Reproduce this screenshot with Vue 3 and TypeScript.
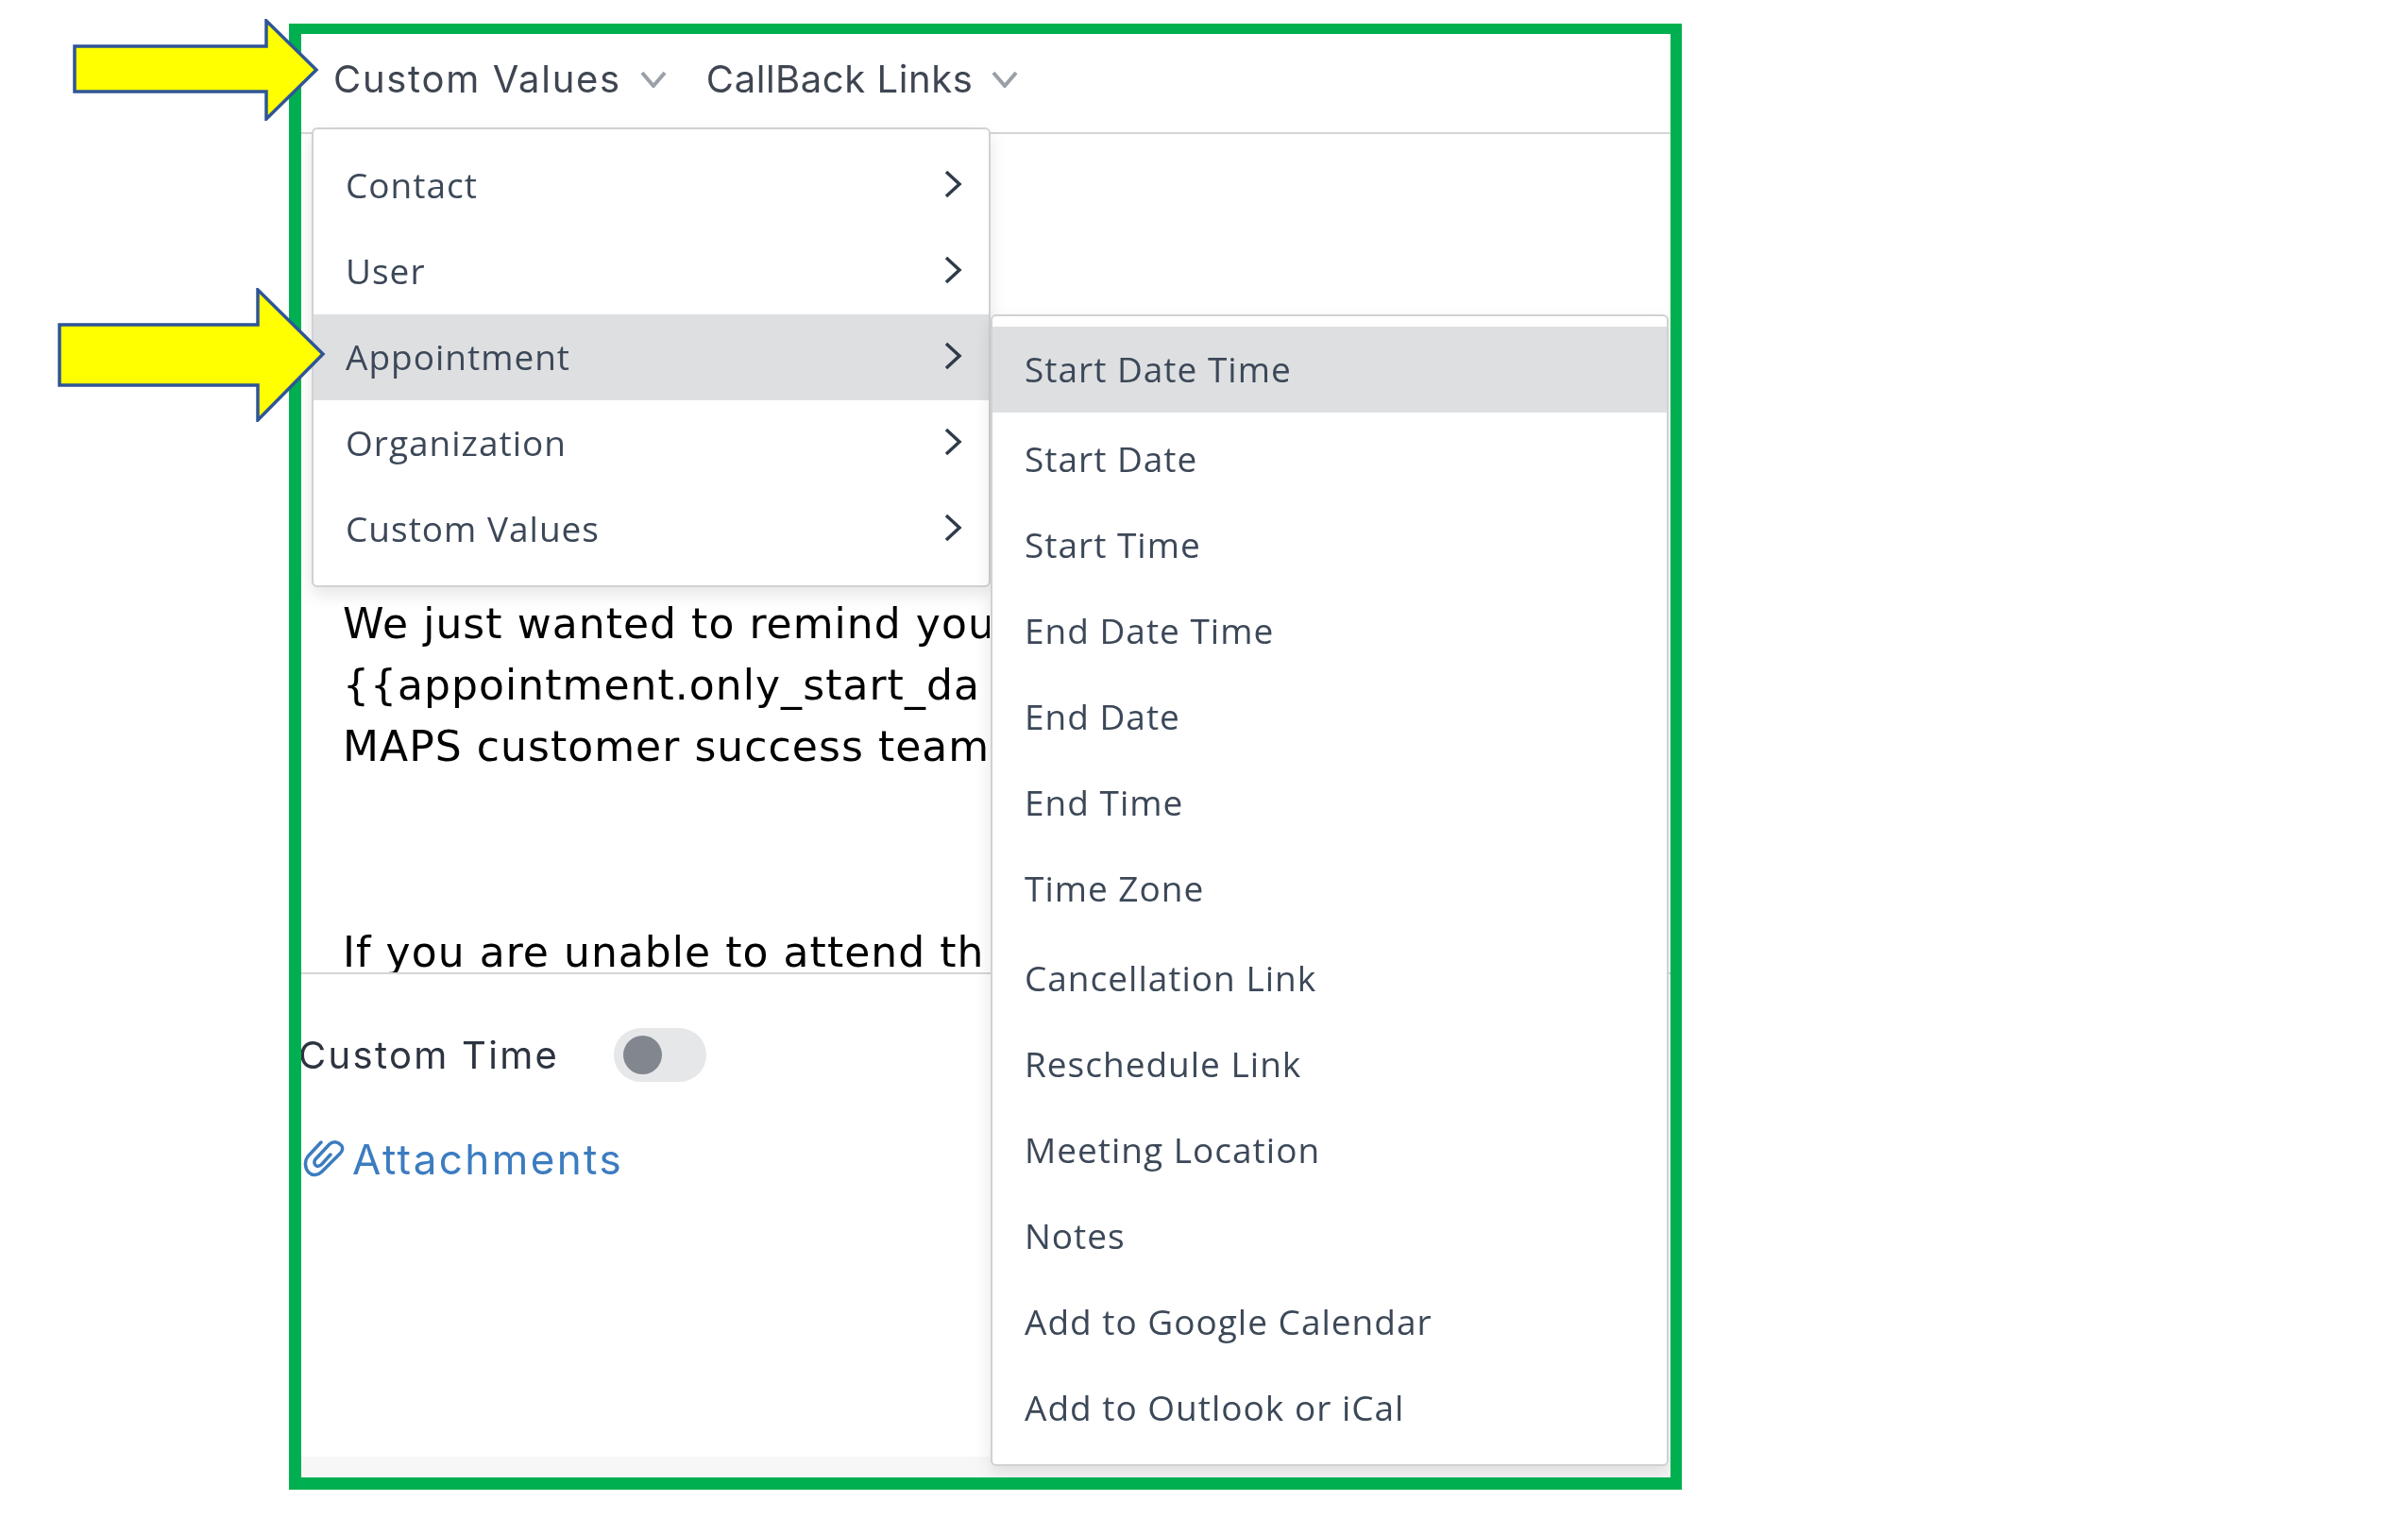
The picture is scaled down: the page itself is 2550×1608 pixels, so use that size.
<script setup lang="ts">
const mainItems: string[] = ['Contact', 'User', 'Appointment', 'Organization', 'Custom Values']
const groups: string[][] = [
  ['Start Date Time'],
  ['Start Date', 'Start Time', 'End Date Time', 'End Date', 'End Time', 'Time Zone'],
  ['Cancellation Link', 'Reschedule Link', 'Meeting Location', 'Notes', 'Add to Google Calendar', 'Add to Outlook or iCal'],
]
const lines: string[] = [
  'We just wanted to remind you',
  '{{appointment.only_start_da',
  'MAPS customer success team',
]
</script>

<template>
  <div class="page">
    <div class="frame">
      <header class="toolbar">
        <button class="tool">
          <span>Custom Values</span>
          <svg class="caret" viewBox="0 0 28 18"><path d="M2 2l12 14L26 2" /></svg>
        </button>
        <button class="tool tool-tight">
          <span>CallBack Links</span>
          <svg class="caret" viewBox="0 0 28 18"><path d="M2 2l12 14L26 2" /></svg>
        </button>
      </header>

      <section class="editor">
        <div class="editor-text">
          <p v-for="line in lines" :key="line" class="line">{{ line }}</p>
          <p class="line spacer-line"></p>
          <p class="line">If you are unable to attend th</p>
        </div>
      </section>

      <div class="toggle-row">
        <span class="toggle-label">Custom Time</span>
        <span class="toggle"><span class="knob"></span></span>
      </div>

      <div class="attach-row">
        <svg class="clip" viewBox="0 0 44 40">
          <path d="M19 2L5 17C1 22 2 30 6 34C10 38 16 37 20 33L39 14C43 10 42 6 39 4C36 1 31 1 28 4L13 20C11 23 12 26 14 27C16 28 18 27 20 25L29 15" />
        </svg>
        <span>Attachments</span>
      </div>

      <div class="grow"></div>
      <div class="strip"></div>

      <nav class="menu main-menu">
        <div v-for="item in mainItems" :key="item" class="item" :class="{ active: item === 'Appointment' }">
          <span class="label">{{ item }}</span>
          <svg class="chev" viewBox="0 0 20 30"><path d="M3 2l14 13L3 28" /></svg>
        </div>
      </nav>

      <nav class="menu sub-menu">
        <div v-for="(group, i) in groups" :key="i" class="group">
          <div v-for="item in group" :key="item" class="item" :class="{ active: item === 'Start Date Time' }">
            <span class="label">{{ item }}</span>
          </div>
        </div>
      </nav>
    </div>

    <svg class="arrow arrow-one" viewBox="0 0 262 108">
      <polygon points="2,29 205,29 205,2 258,54 205,106 205,77 2,77" />
    </svg>
    <svg class="arrow arrow-two" viewBox="0 0 284 142">
      <polygon points="2,39 212,39 212,2 281,70 212,140 212,103 2,103" />
    </svg>
  </div>
</template>

<style>
html, body { margin: 0; background: #fff; }
</style>

<style scoped>
.page {
  position: relative;
  width: 2550px;
  height: 1608px;
  padding: 25px 0 0 306px;
  box-sizing: border-box;
  background: #fff;
  overflow: hidden;
}
.frame {
  position: relative;
  width: 1475px;
  height: 1553px;
  box-sizing: border-box;
  border-style: solid;
  border-color: #00b050;
  border-width: 11px 12px 13px 13px;
  background: #fff;
  display: flex;
  flex-direction: column;
  overflow: hidden;
}
.toolbar {
  height: 106px;
  flex: none;
  box-sizing: border-box;
  border-bottom: 2px solid #d4d5d7;
  display: flex;
  align-items: flex-start;
  padding: 26px 0 0 34px;
  gap: 42px;
}
.tool {
  border: 0;
  background: none;
  padding: 0;
  display: flex;
  align-items: center;
  gap: 20px;
  font-family: "Inter", sans-serif;
  font-size: 40px;
  letter-spacing: 1.7px;
  line-height: 44px;
  color: #3f4652;
}
.tool-tight { letter-spacing: 0.55px; }
.tool span { filter: blur(0.5px); }
.caret { width: 28px; height: 18px; filter: blur(0.4px); }
.caret path { fill: none; stroke: #9aa0a8; stroke-width: 4; }
.editor {
  height: 890px;
  flex: none;
  box-sizing: border-box;
  border-bottom: 2px solid #d4d5d7;
  overflow: hidden;
}
.editor-text {
  width: 729px;
  height: 888px;
  box-sizing: border-box;
  padding: 486px 0 0 44px;
  overflow: hidden;
}
.line {
  margin: 0;
  height: 65px;
  line-height: 65px;
  white-space: nowrap;
  font-family: "DejaVu Sans", sans-serif;
  font-size: 44px;
  letter-spacing: 1.05px;
  color: #000;
  filter: blur(0.4px);
}
.spacer-line { height: 153px; }
.toggle-row {
  display: flex;
  align-items: center;
  margin-top: 57px;
  height: 57px;
}
.toggle-label {
  width: 331px;
  margin-left: -3px;
  font-family: "Inter", sans-serif;
  font-size: 40px;
  letter-spacing: 2.3px;
  white-space: nowrap;
  color: #2c3440;
  filter: blur(0.4px);
}
.toggle {
  width: 98px;
  height: 57px;
  margin-left: 3px;
  border-radius: 29px;
  background: #e5e7e9;
  display: flex;
  align-items: center;
  padding-left: 10px;
  box-sizing: border-box;
}
.knob { width: 41px; height: 41px; border-radius: 50%; background: #81868f; }
.attach-row {
  display: flex;
  align-items: center;
  gap: 8px;
  margin-top: 60px;
  padding-left: 2px;
  height: 44px;
  font-family: "Inter", sans-serif;
  font-size: 44px;
  letter-spacing: 2.4px;
  color: #3c7cc0;
}
.attach-row span { filter: blur(0.4px); }
.clip { width: 44px; height: 40px; filter: blur(0.4px); }
.clip path { fill: none; stroke: #3c7cc0; stroke-width: 3.5; stroke-linecap: round; stroke-linejoin: round; }
.grow { flex: 1; }
.strip { height: 22px; flex: none; background: #f7f7f8; }
.menu {
  position: absolute;
  box-sizing: border-box;
  background: #fff;
  border: 2px solid #d0d1d3;
  border-radius: 6px;
  box-shadow: 0 8px 18px rgba(0, 0, 0, 0.1);
  font-family: "Open Sans", sans-serif;
  font-size: 37px;
  letter-spacing: 1px;
  color: #3c4858;
}
.main-menu {
  left: 11px;
  top: 99px;
  width: 719px;
  height: 487px;
  padding: 14px 0;
}
.sub-menu {
  left: 730px;
  top: 297px;
  width: 718px;
  height: 1220px;
  padding: 11px 0;
  display: flex;
  flex-direction: column;
  gap: 4px;
}
.item {
  height: 91px;
  display: flex;
  align-items: center;
  justify-content: space-between;
  padding: 0 28px 0 34px;
}
.label { filter: blur(0.4px); margin-bottom: 3px; }
.active { background: #dddfe1; }
.chev { width: 20px; height: 30px; margin-top: -4px; }
.chev path { fill: none; stroke: #2f3a4a; stroke-width: 3.5; }
.arrow { position: absolute; }
.arrow polygon { fill: #ffff00; stroke: #2f5597; stroke-width: 3.5; }
.arrow-one { left: 77px; top: 20px; width: 262px; height: 108px; }
.arrow-two { left: 61px; top: 305px; width: 284px; height: 142px; }
</style>
